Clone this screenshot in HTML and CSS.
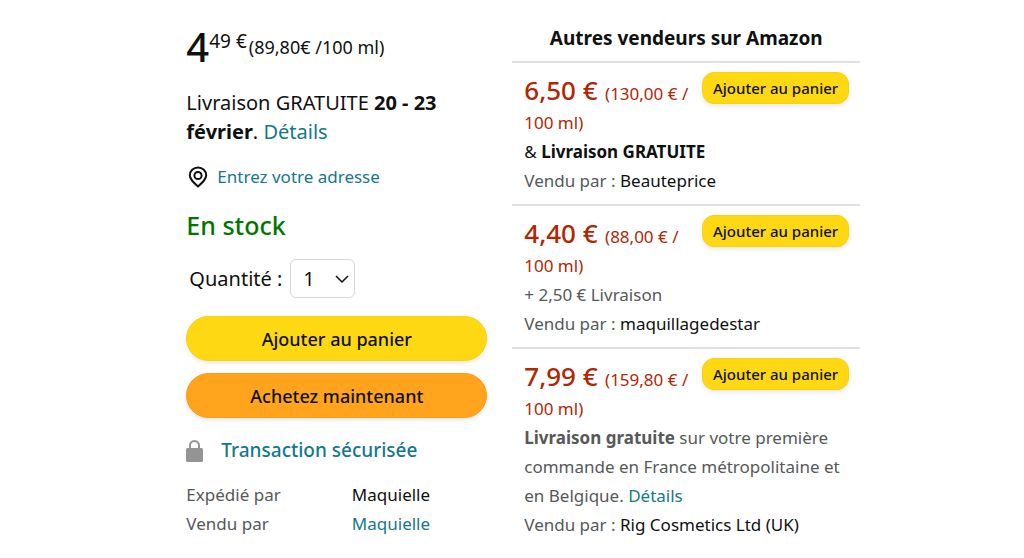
FILE: index.html
```html
<!DOCTYPE html>
<html lang="fr">
<head>
    <meta charset="UTF-8">
    <meta name="viewport" content="width=device-width, initial-scale=1.0">
    <title>Autres vendeurs sur Amazon</title>
    <link rel="stylesheet" href="styles.css">
</head>
<body>

    <main class="page">

        <!-- Buy box -->
        <section class="buybox">
            <p class="price">
                <span class="price-whole">4</span>
                <span class="price-fraction">49 €</span>
                <span class="price-unit">(89,80€ /100 ml)</span>
            </p>

            <p class="delivery">Livraison GRATUITE <b>20 - 23</b> <b>février</b>. <a href="#">Détails</a></p>

            <p class="address">
                <svg class="icon-pin" viewBox="0 0 20 22" aria-hidden="true">
                    <path d="M10 1.500c-4.600 0-8.200 3.400-8.200 7.800 0 4 3.600 7.200 8.200 11.200 4.600-4 8.200-7.200 8.200-11.200 0-4.400-3.600-7.800-8.200-7.800z"/>
                    <circle cx="10" cy="9.500" r="3.600"/>
                </svg>
                <a href="#">Entrez votre adresse</a>
            </p>

            <p class="stock">En stock</p>

            <div class="quantity">
                <label for="quantity">Quantité :</label>
                <span class="select-wrap">
                    <select id="quantity">
                        <option>1</option>
                        <option>2</option>
                        <option>3</option>
                    </select>
                    <svg class="icon-chevron" viewBox="0 0 14 8" aria-hidden="true">
                        <path d="M1 1l6 6 6-6"/>
                    </svg>
                </span>
            </div>

            <button type="button" class="btn btn-cart">Ajouter au panier</button>
            <button type="button" class="btn btn-buy">Achetez maintenant</button>

            <p class="secure">
                <svg class="icon-lock" viewBox="0 0 17 22" aria-hidden="true">
                    <path class="shackle" d="M4 10V5.500a4.500 4.500 0 0 1 9 0V10"/>
                    <rect x="0" y="8" width="17" height="14" rx="1.500"/>
                </svg>
                <a href="#">Transaction sécurisée</a>
            </p>

            <dl class="seller-info">
                <dt>Expédié par</dt>
                <dd>Maquielle</dd>
                <dt>Vendu par</dt>
                <dd><a href="#">Maquielle</a></dd>
            </dl>
        </section>

        <!-- Other sellers -->
        <section class="sellers">
            <h2>Autres vendeurs sur Amazon</h2>

            <article class="offer">
                <button type="button" class="btn-small">Ajouter au panier</button>
                <p class="offer-price"><span class="amount">6,50 €</span> (130,00 € / 100&nbsp;ml)</p>
                <p class="strong">&amp; <b>Livraison GRATUITE</b></p>
                <p>Vendu par : <span class="seller">Beauteprice</span></p>
            </article>

            <article class="offer">
                <button type="button" class="btn-small">Ajouter au panier</button>
                <p class="offer-price"><span class="amount">4,40 €</span> (88,00 € / 100&nbsp;ml)</p>
                <p>+ 2,50 € Livraison</p>
                <p>Vendu par : <span class="seller">maquillagedestar</span></p>
            </article>

            <article class="offer">
                <button type="button" class="btn-small">Ajouter au panier</button>
                <p class="offer-price"><span class="amount">7,99 €</span> (159,80 € / 100&nbsp;ml)</p>
                <p><b>Livraison gratuite</b> sur votre première commande en France métropolitaine et en Belgique. <a href="#">Détails</a></p>
                <p>Vendu par : <span class="seller">Rig Cosmetics Ltd (UK)</span></p>
            </article>
        </section>

    </main>

</body>
</html>
```
FILE: styles.css
```css
* { box-sizing: border-box; }
body { margin: 0; background: #fff; color: #0f1111; font-family: "Noto Sans", "Open Sans", sans-serif; font-size: 17px; line-height: 29px; }
p, h2, dl, dd { margin: 0; }
a { color: #14788a; text-decoration: none; }
button, select { font-family: inherit; color: #0f1111; cursor: pointer; }

.page { display: grid; grid-template-columns: 301fr 348fr; gap: 25px; align-items: start; padding: 24px 16% 16px 18.2%; }

/* Buy box */
.price { display: flex; align-items: flex-start; height: 46px; }
.price-whole { font-size: 40px; font-weight: 500; line-height: 46px; }
.price-fraction { font-size: 19px; line-height: 34px; white-space: nowrap; }
.price-unit { padding-left: 2px; font-size: 18px; line-height: 46px; white-space: nowrap; }
.delivery { margin-top: 18px; font-size: 20px; }
.address { display: flex; align-items: center; gap: 9px; margin-top: 16px; padding-left: 2px; }
.icon-pin { width: 20px; height: 22px; fill: none; stroke: #0f1111; stroke-width: 2; }
.stock { margin-top: 18px; color: #007600; font-size: 25px; font-weight: 500; line-height: 32px; }
.quantity { display: flex; align-items: center; gap: 8px; margin-top: 18px; padding-left: 3px; font-size: 20px; }
.select-wrap { display: grid; align-items: center; }
.select-wrap select { grid-area: 1 / 1; width: 65px; height: 39px; padding: 0 12px; border: 1px solid #d5d9d9; border-radius: 6px; background: #fff; font-size: 20px; appearance: none; }
.icon-chevron { grid-area: 1 / 1; justify-self: end; width: 14px; height: 8px; margin-right: 6px; fill: none; stroke: #0f1111; stroke-width: 1.5; pointer-events: none; }
.btn { display: block; width: 100%; height: 45px; padding: 0; border: 1px solid #fcd200; border-radius: 23px; font-size: 18px; font-weight: 500; box-shadow: 0 2px 5px rgba(15, 17, 17, 0.1); }
.btn-cart { margin-top: 18px; background: #ffd814; }
.btn-buy { margin-top: 12px; background: #ffa41c; border-color: #ff9a10; }
.secure { display: flex; align-items: center; gap: 18px; margin-top: 18px; font-size: 19px; font-weight: 500; }
.icon-lock { width: 17px; height: 22px; fill: #949494; }
.icon-lock .shackle { fill: none; stroke: #949494; stroke-width: 2; }
.seller-info { display: grid; grid-template-columns: 55% 1fr; margin-top: 15px; }
.seller-info dt { color: #565959; }

/* Other sellers */
.sellers h2 { height: 39px; font-size: 19px; line-height: 28px; text-align: center; border-bottom: 2px solid #dde1e1; }
.offer { padding: 9px 11px 9px 12px; border-bottom: 2px solid #dde1e1; color: #565959; }
.offer:last-child { border-bottom: 0; }
.offer-price { color: #b12704; }
.offer-price .amount { margin-right: 3px; font-size: 26px; font-weight: 500; line-height: 36px; }
.offer .strong, .offer .seller { color: #0f1111; }
.btn-small { float: right; height: 32px; padding: 0 10px; border: 1px solid #fcd200; border-radius: 12px; background: #ffd814; font-size: 15px; font-weight: 500; box-shadow: 0 2px 5px rgba(15, 17, 17, 0.1); }
```
